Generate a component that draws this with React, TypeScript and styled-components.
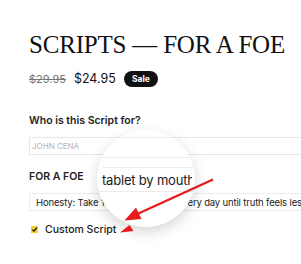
import styled, { createGlobalStyle } from "styled-components";

const GlobalStyle = createGlobalStyle`
	html, body {
		margin: 0;
		padding: 0;
		background: #fff;
	}
`;

const SANS = `Inter, "Open Sans", "Liberation Sans", sans-serif`;

export default function App() {
	return (
		<>
			<GlobalStyle />
			<Page>
				<Header>
					<Title>SCRIPTS — FOR A FOE</Title>

					<PriceRow>
						<OldPrice>$29.95</OldPrice>
						<Price>$24.95</Price>
						<SaleBadge>Sale</SaleBadge>
					</PriceRow>
				</Header>

				<Form>
					<Field>
						<Label>Who is this Script for?</Label>
						<TextInput placeholder="JOHN CENA" />
					</Field>

					<Field>
						<Label>FOR A FOE</Label>
						<SelectBox>
							Honesty: Take 1 tablet by mouth every day until truth feels less
						</SelectBox>
					</Field>

					<CheckRow>
						<CheckBox>
							<svg width="7" height="7" viewBox="0 0 7 7">
								<path d="M1.3 3.6 L2.9 5.1 L5.8 1.6" fill="none" stroke="#111" strokeWidth="1.3" />
							</svg>
						</CheckBox>
						<CheckLabel>Custom Script</CheckLabel>
					</CheckRow>
				</Form>

				<Magnifier>
					<MagLine $top={7} />
					<MagLine $top={27} />
					<MagLine $top={37} $left={5} />
					<MagLine $top={61} />
					<MagText>tablet by mouth</MagText>
				</Magnifier>

				<Arrows width="301" height="264" viewBox="0 0 301 264">
					<line x1="213" y1="179.5" x2="134" y2="215.5" stroke="#e81a1a" strokeWidth="2.2" />
					<polygon points="124.5,220.5 136,207.5 141.5,219" fill="#e81a1a" />
					<polygon points="120,232.5 129.5,225 133.5,231" fill="#e81a1a" />
				</Arrows>
			</Page>
		</>
	);
}

const Page = styled.div`
	position: relative;
	width: 301px;
	height: 264px;
	overflow: hidden;
	padding: 31px 0 0 29px;
	box-sizing: border-box;
	font-family: ${SANS};
	color: #1a1a1a;
`;

const Header = styled.div`
	display: flex;
	flex-direction: column;
	gap: 12px;
`;

const Title = styled.h1`
	margin: 0;
	font-family: "Liberation Serif", "DejaVu Serif", serif;
	font-weight: 400;
	font-size: 25px;
	line-height: 27px;
	letter-spacing: -0.2px;
	white-space: nowrap;
	color: #111;
`;

const PriceRow = styled.div`
	display: flex;
	align-items: center;
	gap: 8px;
	height: 17px;
`;

const OldPrice = styled.span`
	font-size: 11px;
	color: #777;
	text-decoration: line-through;
`;

const Price = styled.span`
	font-size: 12.5px;
	color: #111;
`;

const SaleBadge = styled.span`
	display: inline-flex;
	align-items: center;
	justify-content: center;
	width: 34px;
	height: 16px;
	border-radius: 8px;
	background: #111;
	color: #fff;
	font-size: 8.5px;
	font-weight: 700;
`;

const Form = styled.div`
	display: flex;
	flex-direction: column;
	gap: 16px;
	margin-top: 28px;
`;

const Field = styled.div`
	display: flex;
	flex-direction: column;
	gap: 10px;
`;

const Label = styled.div`
	font-size: 10.5px;
	font-weight: 600;
	line-height: 12px;
	color: #222;
	white-space: nowrap;
`;

const TextInput = styled.input`
	display: block;
	margin: 0;
	width: 300px;
	height: 18px;
	box-sizing: border-box;
	border: 1px solid #e6e6e6;
	padding: 0 2px;
	font-family: ${SANS};
	font-size: 8px;
	outline: none;

	&::placeholder {
		color: #b4b4b4;
	}
`;

const SelectBox = styled.div`
	width: 300px;
	height: 18px;
	box-sizing: border-box;
	border: 1px solid #ececec;
	padding: 0 6px;
	display: flex;
	align-items: center;
	font-size: 9.5px;
	letter-spacing: -0.15px;
	color: #222;
	white-space: nowrap;
	overflow: hidden;
`;

const CheckRow = styled.div`
	display: flex;
	align-items: center;
	gap: 7px;
	margin-top: -4px;
	padding-left: 2px;
`;

const CheckBox = styled.span`
	width: 7px;
	height: 7px;
	background: #f3cf2a;
	display: flex;
	align-items: center;
	justify-content: center;
`;

const CheckLabel = styled.span`
	font-size: 10.5px;
	font-weight: 500;
	color: #222;
`;

const Magnifier = styled.div`
	position: absolute;
	left: 97px;
	top: 130px;
	width: 98px;
	height: 97px;
	border-radius: 50%;
	background: #fff;
	overflow: hidden;
	box-shadow: 0 5px 14px rgba(0, 0, 0, 0.16);
`;

const MagLine = styled.div<{ $top: number; $left?: number }>`
	position: absolute;
	top: ${(p) => p.$top}px;
	left: ${(p) => p.$left ?? 0}px;
	right: 0;
	height: 1px;
	background: #ececec;
`;

const MagText = styled.div`
	position: absolute;
	left: 5px;
	top: 42px;
	width: 90px;
	overflow: hidden;
	white-space: nowrap;
	font-size: 13px;
	letter-spacing: -0.2px;
	line-height: 16px;
	color: #1a1a1a;
`;

const Arrows = styled.svg`
	position: absolute;
	left: 0;
	top: 0;
	pointer-events: none;
`;
